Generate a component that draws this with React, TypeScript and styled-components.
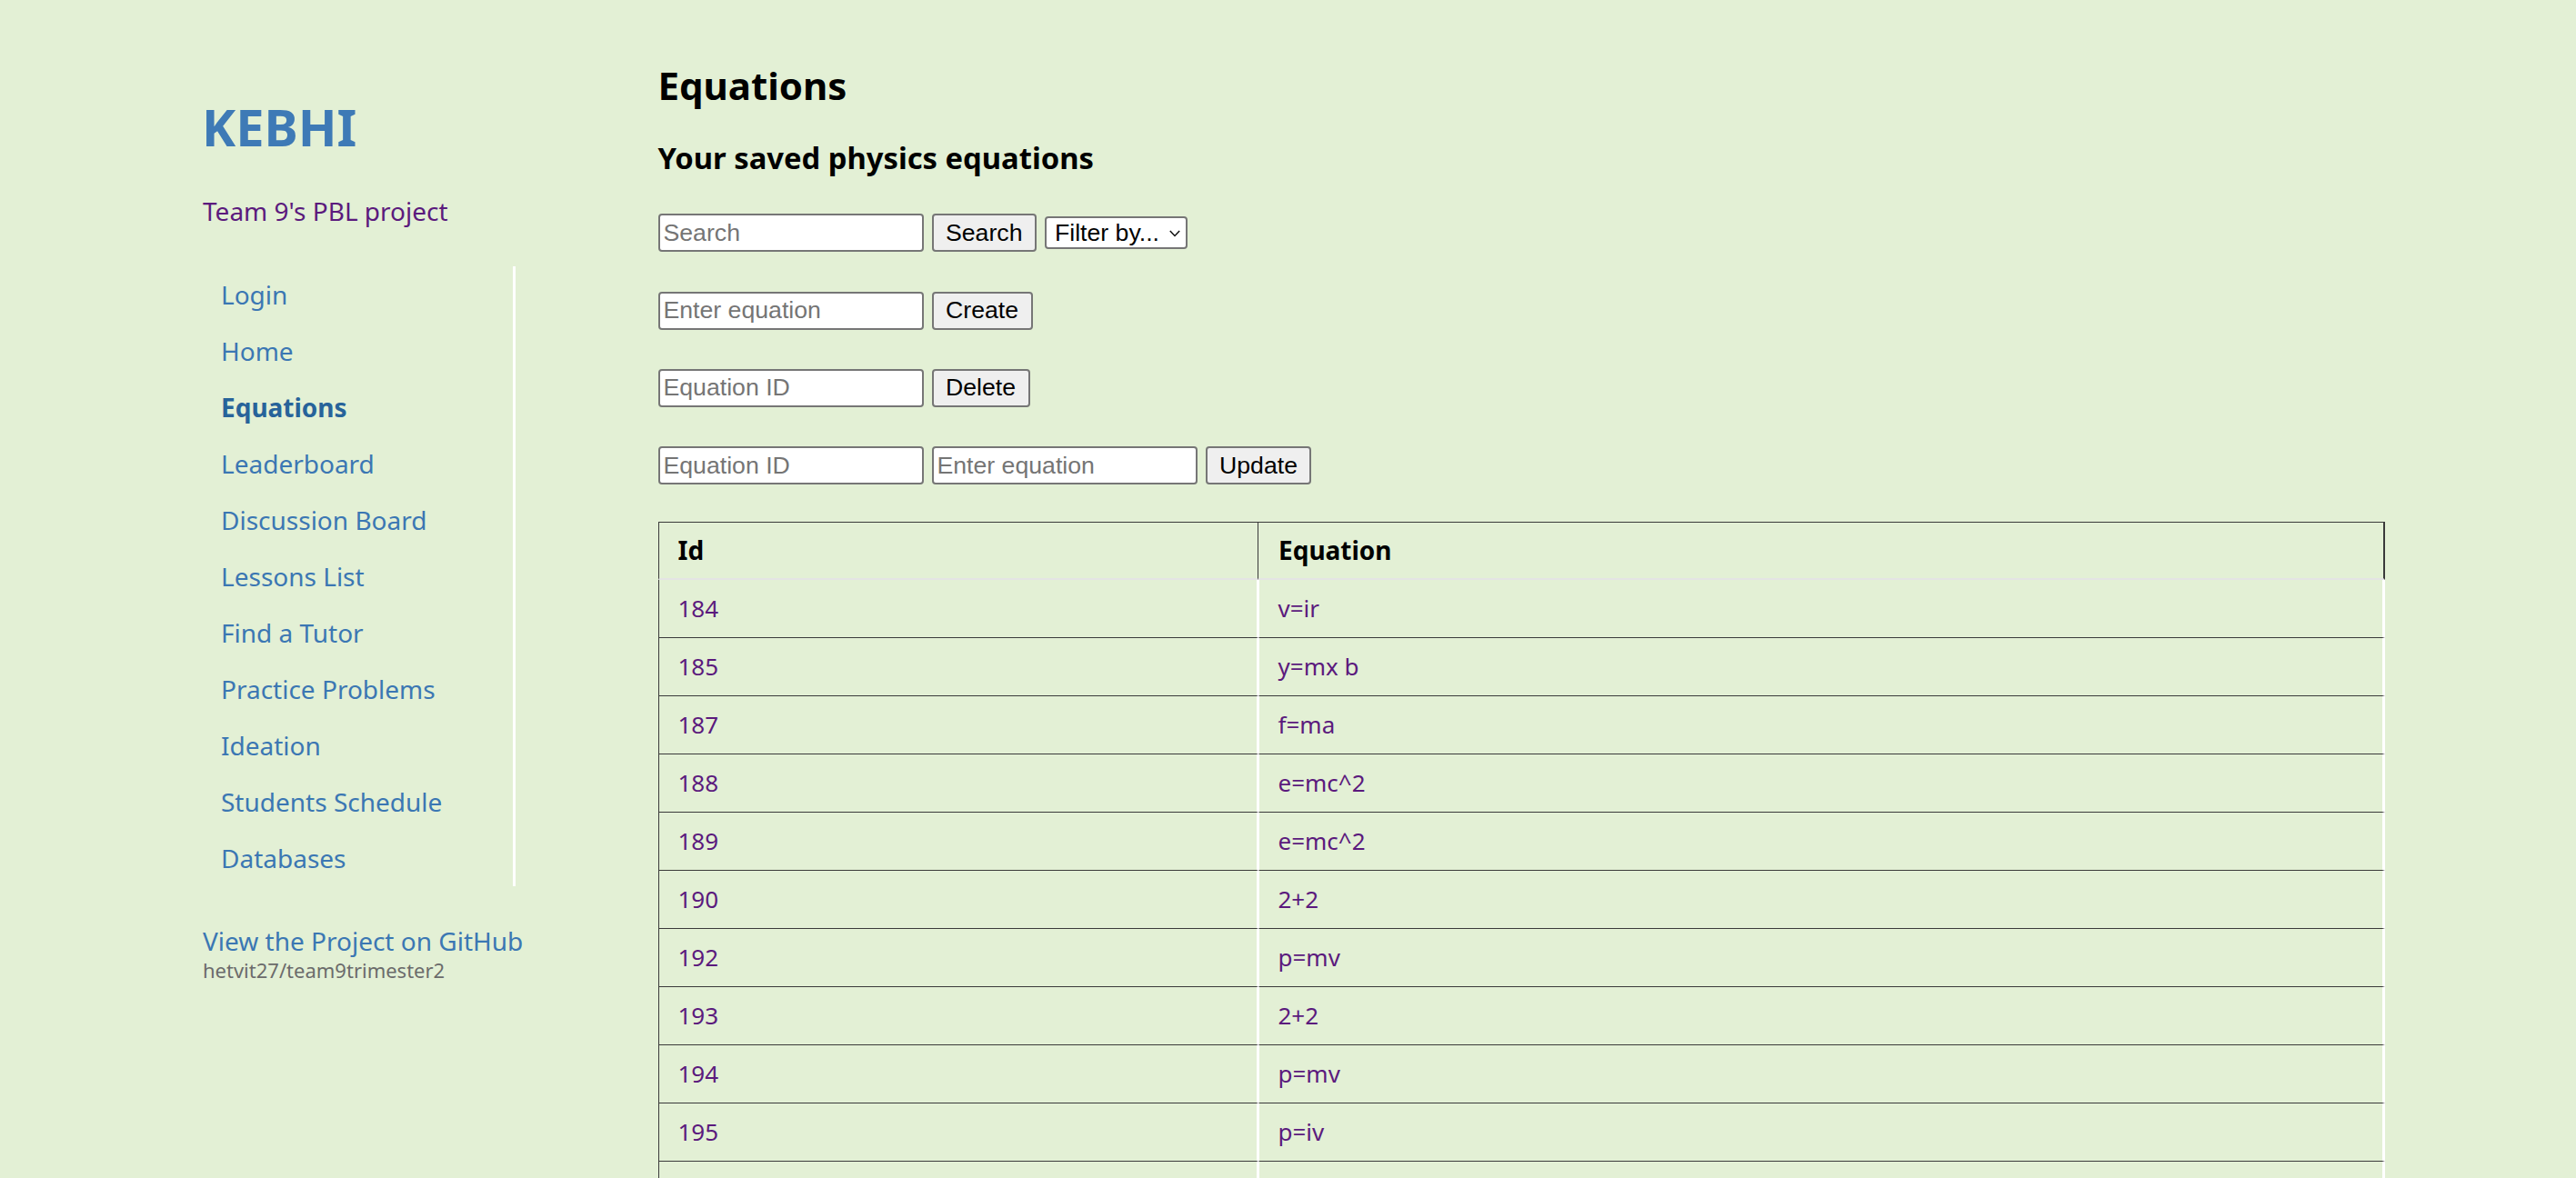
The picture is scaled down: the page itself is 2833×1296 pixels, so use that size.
import React from "react";
import styled, { createGlobalStyle } from "styled-components";

const GlobalStyle = createGlobalStyle`
  html, body {
    margin: 0;
    padding: 0;
    background: #e3f0d5;
  }
  body {
    font-family: "Noto Sans", "Open Sans", sans-serif;
    color: #5b1a7d;
  }
  *, *::before, *::after { box-sizing: border-box; }
`;

const Page = styled.div`
  display: flex;
  align-items: flex-start;
  padding-left: 222px;
  min-height: 1296px;
`;

const Sidebar = styled.header`
  flex: none;
  width: 501.5px;
  display: flex;
  flex-direction: column;
  padding-top: 105px;
`;

const Brand = styled.h1`
  margin: 0;
  font-size: 56px;
  line-height: 68px;
  font-weight: 700;
  color: #3e7ab6;
`;

const Tagline = styled.p`
  margin: 38.4px 0 0;
  font-size: 28px;
  line-height: 42px;
  color: #5b1a7d;
  padding-left: 1px;
`;

const Nav = styled.nav`
  margin-top: 39.6px;
  width: 345px;
  border-right: 3px solid #ffffff;
  display: flex;
  flex-direction: column;
`;

const NavLink = styled.a<{ $active?: boolean }>`
  display: block;
  height: 62px;
  line-height: 62px;
  padding-left: 21px;
  font-size: 28px;
  font-weight: ${(p) => (p.$active ? 700 : 400)};
  color: ${(p) => (p.$active ? "#27639a" : "#3b77b3")};
  text-decoration: none;
`;

const Repo = styled.div`
  margin-top: 41.1px;
  display: flex;
  flex-direction: column;
  padding-left: 1px;
`;

const RepoLink = styled.a`
  font-size: 28px;
  line-height: 38px;
  color: #3b77b3;
  text-decoration: none;
`;

const RepoName = styled.small`
  font-size: 22px;
  line-height: 26px;
  color: #6b6b6b;
`;

const Main = styled.section`
  flex: none;
  width: 1899px;
  padding-top: 68.7px;
  display: flex;
  flex-direction: column;
`;

const Title = styled.h2`
  margin: 0 0 35.2px;
  font-size: 42px;
  line-height: 50px;
  font-weight: 700;
  color: #000;
`;

const Subtitle = styled.h3`
  margin: 0 0 41.4px;
  font-size: 32.76px;
  line-height: 40px;
  font-weight: 700;
  color: #000;
`;

const Controls = styled.div`
  display: flex;
  flex-direction: column;
  gap: 43.3px;
`;

const Row = styled.form`
  display: flex;
  align-items: center;
  gap: 9px;
  height: 42px;
  margin: 0;
`;

const formFont = `
  font-family: "Liberation Sans", Arial, sans-serif;
  font-size: 26.67px;
  color: #000;
`;

const TextInput = styled.input`
  ${formFont}
  width: 292px;
  height: 42px;
  padding: 2px 4px;
  border: 2px solid #767676;
  border-radius: 4px;
  background: #fff;
  outline: none;
  &::placeholder {
    color: #757575;
  }
`;

const Button = styled.button`
  ${formFont}
  height: 42px;
  padding: 0 13.5px;
  border: 2px solid #767676;
  border-radius: 4px;
  background: #efefef;
  cursor: pointer;
`;

const SelectWrap = styled.div`
  position: relative;
  display: flex;
  align-items: center;
`;

const Select = styled.select`
  ${formFont}
  appearance: none;
  -webkit-appearance: none;
  width: 157px;
  height: 36px;
  padding: 0 0 0 9px;
  border: 2px solid #767676;
  border-radius: 4px;
  background: #fff;
  outline: none;
`;

const Chevron = styled.svg`
  position: absolute;
  right: 8px;
  top: 14.5px;
  width: 12px;
  height: 8px;
  pointer-events: none;
`;

const Table = styled.table`
  margin-top: 40.8px;
  width: 100%;
  table-layout: fixed;
  border-collapse: separate;
  border-spacing: 0;
`;

const Col = styled.col<{ $w?: number }>`
  width: ${(p) => (p.$w ? `${p.$w}px` : "auto")};
`;

const Th = styled.th<{ $first?: boolean }>`
  text-align: left;
  font-size: 28px;
  line-height: 39px;
  font-weight: 700;
  color: #000;
  padding: 11px 19px 11px ${(p) => (p.$first ? "21px" : "22.5px")};
  border-top: 1px solid #3a3a3a;
  border-left: ${(p) => (p.$first ? "1px solid #3a3a3a" : "0")};
  border-right: ${(p) => (p.$first ? "1px solid #3a3a3a" : "2px solid #3a3a3a")};
  border-bottom: 2px solid #e4e4e4;
`;

const Td = styled.td<{ $first?: boolean }>`
  text-align: left;
  font-size: 26px;
  line-height: 39px;
  color: #5b1a7d;
  padding: 12px 19px 12px ${(p) => (p.$first ? "21px" : "21px")};
  border-bottom: 1px solid #3a3a3a;
  border-left: ${(p) => (p.$first ? "1px solid #3a3a3a" : "1.5px solid #ffffff")};
  border-right: ${(p) => (p.$first ? "2px solid #ffffff" : "3px solid #ffffff")};
`;

const navItems = [
  "Login",
  "Home",
  "Equations",
  "Leaderboard",
  "Discussion Board",
  "Lessons List",
  "Find a Tutor",
  "Practice Problems",
  "Ideation",
  "Students Schedule",
  "Databases",
];

const equations: [number, string][] = [
  [184, "v=ir"],
  [185, "y=mx b"],
  [187, "f=ma"],
  [188, "e=mc^2"],
  [189, "e=mc^2"],
  [190, "2+2"],
  [192, "p=mv"],
  [193, "2+2"],
  [194, "p=mv"],
  [195, "p=iv"],
  [196, "f=ma"],
];

export default function App() {
  return (
    <>
      <GlobalStyle />
      <Page>
        <Sidebar>
          <Brand>KEBHI</Brand>
          <Tagline>Team 9's PBL project</Tagline>
          <Nav>
            {navItems.map((item) => (
              <NavLink key={item} href="#" $active={item === "Equations"}>
                {item}
              </NavLink>
            ))}
          </Nav>
          <Repo>
            <RepoLink href="#">View the Project on GitHub</RepoLink>
            <RepoName>hetvit27/team9trimester2</RepoName>
          </Repo>
        </Sidebar>
        <Main>
          <Title>Equations</Title>
          <Subtitle>Your saved physics equations</Subtitle>
          <Controls>
            <Row onSubmit={(e) => e.preventDefault()}>
              <TextInput placeholder="Search" />
              <Button type="submit">Search</Button>
              <SelectWrap>
                <Select defaultValue="">
                  <option value="">Filter by...</option>
                  <option value="id">Id</option>
                  <option value="equation">Equation</option>
                </Select>
                <Chevron viewBox="0 0 12 8">
                  <path d="M0.8 1 L6 6.4 L11.2 1" fill="none" stroke="#111" strokeWidth="1.5" />
                </Chevron>
              </SelectWrap>
            </Row>
            <Row onSubmit={(e) => e.preventDefault()}>
              <TextInput placeholder="Enter equation" />
              <Button type="submit">Create</Button>
            </Row>
            <Row onSubmit={(e) => e.preventDefault()}>
              <TextInput placeholder="Equation ID" />
              <Button type="submit">Delete</Button>
            </Row>
            <Row onSubmit={(e) => e.preventDefault()}>
              <TextInput placeholder="Equation ID" />
              <TextInput placeholder="Enter equation" />
              <Button type="submit">Update</Button>
            </Row>
          </Controls>
          <Table>
            <colgroup>
              <Col $w={660} />
              <Col />
            </colgroup>
            <thead>
              <tr>
                <Th $first>Id</Th>
                <Th>Equation</Th>
              </tr>
            </thead>
            <tbody>
              {equations.map(([id, eq]) => (
                <tr key={id}>
                  <Td $first>{id}</Td>
                  <Td>{eq}</Td>
                </tr>
              ))}
            </tbody>
          </Table>
        </Main>
      </Page>
    </>
  );
}
